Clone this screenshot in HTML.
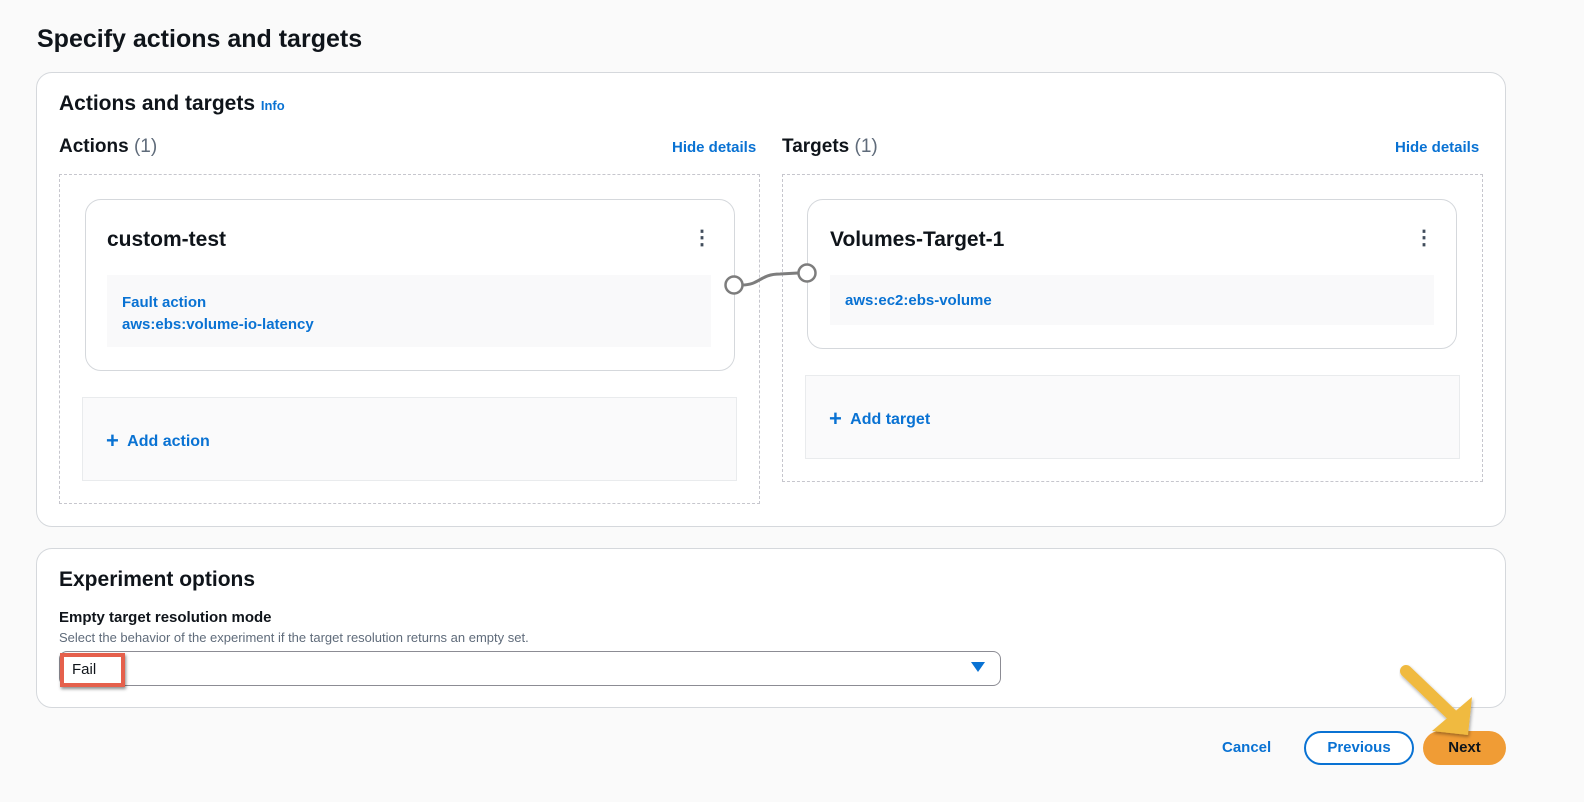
<!DOCTYPE html>
<html><head><meta charset="utf-8"><style>
*{box-sizing:border-box;margin:0;padding:0}
body{width:1584px;height:802px;background:#fafafa;font-family:"Liberation Sans",sans-serif;position:relative;overflow:hidden;color:#0f141a}
.a{position:absolute}
.b{font-weight:bold}
.blue{color:#0972d3;font-weight:bold}
.panel{position:absolute;background:#fff;border:1px solid #d5d8dc;border-radius:16px}
.dash{position:absolute;border:1px dashed #c6c6cd}
.card{position:absolute;background:#fff;border:1px solid #d5d8dc;border-radius:16px}
.inner{position:absolute;background:#f9f9fa}
.addbox{position:absolute;background:#fafafb;border:1px solid #e9ebed}
</style></head><body>
<div class="a b" style="left:37px;top:25px;font-size:25px">Specify actions and targets</div>

<div class="panel" style="left:36px;top:72px;width:1470px;height:455px"></div>
<div class="a b" style="left:59px;top:92px;font-size:21px">Actions and targets <span class="blue" style="font-size:13px">Info</span></div>
<div class="a" style="left:59px;top:136px;font-size:19px"><span class="b">Actions</span> <span style="color:#5f6b7a">(1)</span></div>
<div class="a blue" style="left:672px;top:139px;font-size:15px">Hide details</div>
<div class="a" style="left:782px;top:136px;font-size:19px"><span class="b">Targets</span> <span style="color:#5f6b7a">(1)</span></div>
<div class="a blue" style="left:1395px;top:139px;font-size:15px">Hide details</div>

<div class="dash" style="left:59px;top:174px;width:701px;height:330px"></div>
<div class="dash" style="left:782px;top:174px;width:701px;height:308px"></div>

<div class="card" style="left:85px;top:199px;width:650px;height:172px"></div>
<div class="a b" style="left:107px;top:228px;font-size:21px">custom-test</div>
<div class="a b" style="left:692px;top:228px;font-size:20px;line-height:20px;color:#414d5c">⋮</div>
<div class="inner" style="left:107px;top:275px;width:604px;height:72px"></div>
<div class="a blue" style="left:122px;top:292px;font-size:15px;line-height:22px">Fault action<br>aws:ebs:volume-io-latency</div>

<div class="addbox" style="left:82px;top:397px;width:655px;height:84px"></div>
<div class="a blue" style="left:106px;top:428px;font-size:16px"><span style="font-size:22px;vertical-align:-2px">+</span>&nbsp; Add action</div>

<div class="card" style="left:807px;top:199px;width:650px;height:150px"></div>
<div class="a b" style="left:830px;top:228px;font-size:21px">Volumes-Target-1</div>
<div class="a b" style="left:1414px;top:228px;font-size:20px;line-height:20px;color:#414d5c">⋮</div>
<div class="inner" style="left:830px;top:275px;width:604px;height:50px"></div>
<div class="a blue" style="left:845px;top:292px;font-size:15px">aws:ec2:ebs-volume</div>

<div class="addbox" style="left:805px;top:375px;width:655px;height:84px"></div>
<div class="a blue" style="left:829px;top:406px;font-size:16px"><span style="font-size:22px;vertical-align:-2px">+</span>&nbsp; Add target</div>

<svg class="a" style="left:720px;top:260px" width="100" height="40">
<path d="M22 25 C40 25 40 14 60 14 L78 13" stroke="#7d7d7d" stroke-width="3" fill="none"/>
<circle cx="14" cy="25" r="8.5" fill="#fff" stroke="#7d7d7d" stroke-width="2.5"/>
<circle cx="87" cy="13" r="8.5" fill="#fff" stroke="#7d7d7d" stroke-width="2.5"/>
</svg>

<div class="panel" style="left:36px;top:548px;width:1470px;height:160px"></div>
<div class="a b" style="left:59px;top:568px;font-size:21px">Experiment options</div>
<div class="a b" style="left:59px;top:609px;font-size:15px">Empty target resolution mode</div>
<div class="a" style="left:59px;top:630px;font-size:13px;color:#5f6b7a">Select the behavior of the experiment if the target resolution returns an empty set.</div>
<div class="a" style="left:59px;top:651px;width:942px;height:35px;background:#fff;border:1px solid #8c8c94;border-radius:8px"></div>
<svg class="a" style="left:971px;top:662px" width="14" height="10"><path d="M0 0 L14 0 L7 10Z" fill="#0972d3"/></svg>
<div class="a" style="left:60px;top:653px;width:65px;height:34px;border:4px solid #e5604c;box-shadow:1px 2px 3px rgba(0,0,0,.45);background:#fff"></div>
<div class="a" style="left:72px;top:661px;font-size:15px">Fail</div>

<div class="a blue" style="left:1222px;top:739px;font-size:15px">Cancel</div>
<div class="a blue" style="left:1304px;top:731px;width:110px;height:34px;border:2px solid #0972d3;border-radius:17px;background:#fff;font-size:15px;text-align:center;line-height:30px">Previous</div>
<div class="a b" style="left:1423px;top:731px;width:83px;height:34px;border-radius:17px;background:#f09c35;font-size:15px;text-align:center;line-height:34px">Next</div>

<svg class="a" style="left:1390px;top:655px" width="95" height="90">
<defs><filter id="s"><feDropShadow dx="1" dy="2" stdDeviation="1.5" flood-opacity=".35"/></filter></defs>
<g filter="url(#s)">
<path d="M16 16 L62 60" stroke="#f0ba40" stroke-width="12" stroke-linecap="round"/>
<path d="M82 42 L78 80 L42 76 Z" fill="#f0ba40"/>
</g>
</svg>
</body></html>
